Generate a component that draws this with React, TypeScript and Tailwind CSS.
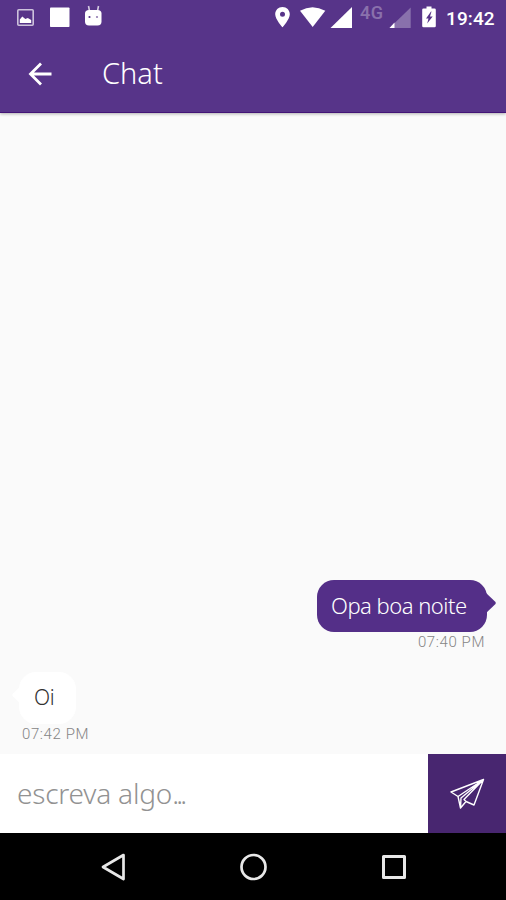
import React, { useState } from "react";
import { clsx } from "clsx";

interface Message {
  id: number;
  text: string;
  time: string;
  mine: boolean;
}

const MESSAGES: Message[] = [
  { id: 1, text: "Opa boa noite", time: "07:40 PM", mine: true },
  { id: 2, text: "Oi", time: "07:42 PM", mine: false },
];

function StatusBar() {
  return (
    <div className="flex h-[34px] items-center justify-between pl-[17px] pr-[10px] font-[Roboto,sans-serif] text-white">
      <svg width="86" height="34" viewBox="0 0 86 34" fill="currentColor" aria-hidden="true">
        {/* Gallery */}
        <rect x="0.8" y="9.8" width="15.4" height="15.4" rx="1" fill="none" stroke="currentColor" strokeWidth="1.6" opacity="0.7" />
        <path d="M2.8 23v-3.500l2.500-3 3 2.500 2.500-1 3.400 2V23z" />
        <rect x="33" y="7.5" width="19.500" height="19.500" rx="0.800" />
        {/* Android head */}
        <path d="M71.500 6l1 5M81.500 6l-1 5" stroke="currentColor" strokeWidth="1.600" opacity="0.75" />
        <path d="M68 13.500q0-3.500 4-3.500h8.500q4 0 4 3.500v8q0 4-4 4H72q-4 0-4-4z" />
        <circle cx="72.500" cy="17" r="1.100" fill="#573489" />
        <circle cx="80" cy="17" r="1.100" fill="#573489" opacity="0.65" />
      </svg>
      <div className="flex items-center">
        <svg width="80" height="34" viewBox="273 0 80 34" fill="currentColor" aria-hidden="true">
          <path fillRule="evenodd" d="M282.500 7c-4.200 0-7.300 3.200-7.300 7.200 0 5 7.300 13 7.300 13s7.300-8 7.300-13c0-4-3.100-7.200-7.300-7.200zm0 4.800a2.500 2.500 0 1 1 0 5 2.500 2.500 0 0 1 0-5z" />
          <path d="M300 10.800Q312.500 3.500 325.300 10.800L312.700 27z" />
          <path d="M352 7v21h-21.500z" />
        </svg>
        <span className="w-[31px] -translate-y-1 pl-[7px] text-[18px] font-medium leading-none tracking-[0.5px] opacity-30">4G</span>
        <svg width="62" height="34" viewBox="384 0 62 34" fill="currentColor" aria-hidden="true">
          <path d="M410.700 7.500V28h-21.200z" opacity="0.300" />
          <path d="M394.500 22.500V28h-5z" />
          <path fillRule="evenodd" d="M426.500 6.500h5v2h3q1.300 0 1.300 1.300V26q0 1.300-1.300 1.300h-11q-1.300 0-1.300-1.300V9.800q0-1.300 1.300-1.300h3zM431 11.500l-5 7h2.500l-1.300 5 5.500-7h-2.700l1.500-5z" />
        </svg>
        <span className="w-[50px] translate-y-px whitespace-nowrap text-[19px] font-medium leading-none tracking-[0.1px]">19:42</span>
      </div>
    </div>
  );
}

function Header() {
  return (
    <header className="z-10 h-[113px] shrink-0 border-b border-[#431477] bg-[#573489] text-white shadow-[0_1px_3px_rgba(0,0,0,0.3)]">
      <StatusBar />
      <div className="flex h-[77px] items-center pl-7">
        <button type="button" aria-label="Voltar" className="pt-0.5">
          <svg width="24" height="24" viewBox="0 0 24 24" fill="none" stroke="currentColor" strokeWidth="2.800" aria-hidden="true">
            <path d="M23.500 12H2.500M13 1.500L2.500 12L13 22.500" />
          </svg>
        </button>
        <h1 className="pl-[50px] text-[29px] font-light leading-none">Chat</h1>
      </div>
    </header>
  );
}

function Bubble({ message }: { message: Message }) {
  const { mine, text, time } = message;

  return (
    <div className={clsx("flex flex-col", mine ? "items-end pr-[19px]" : "items-start pl-[19px]")}>
      <div
        className={clsx(
          "relative flex h-[52px] items-center rounded-[17px] font-light",
          mine
            ? "w-[170px] bg-[#542f88] pb-0.5 pl-[14px] text-[22px] tracking-[-0.5px] text-white"
            : "w-[57px] bg-white pl-[15px] text-[21px] tracking-[-0.3px] text-[#333333]"
        )}
      >
        {text}
        <svg
          width="11"
          height="22"
          viewBox="0 0 11 22"
          fill="currentColor"
          className={clsx("absolute top-3", mine ? "-right-[9px] text-[#542f88]" : "-left-[7px] rotate-180 text-white")}
          aria-hidden="true"
        >
          <path d="M0 0L10.500 10Q11 11 10.500 12L0 22z" />
        </svg>
      </div>
      <time
        className={clsx(
          "font-[Roboto,sans-serif] text-[15px] font-light leading-[20px] tracking-[0.6px] text-[#858585]",
          mine ? "pr-[2px]" : "pl-[3px]"
        )}
      >
        {time}
      </time>
    </div>
  );
}

function Composer() {
  const [text, setText] = useState("");

  return (
    <form className="flex h-[79px] shrink-0 bg-white" onSubmit={(e: React.FormEvent) => e.preventDefault()}>
      <label className="relative flex min-w-0 flex-1 items-center text-[28px] font-light tracking-[-0.2px]">
        <input
          value={text}
          onChange={(e: React.ChangeEvent<HTMLInputElement>) => setText(e.target.value)}
          className="h-full w-full pl-[17px] outline-none"
        />
        {!text && (
          <span className="pointer-events-none absolute left-[17px] -translate-y-px text-[#929292]">
            escreva algo<span className="tracking-[-2.800px]">...</span>
          </span>
        )}
      </label>
      <button type="submit" aria-label="Enviar" className="flex w-[78px] items-center justify-center bg-[#482670] text-white">
        <svg width="36" height="32" viewBox="0 0 36 32" fill="none" stroke="currentColor" strokeWidth="1.400" strokeLinejoin="round" aria-hidden="true">
          <path d="M34.500 1.500L2 14L9 18.500L11.500 30L17 23.500L25 27zM34.500 1.500L9 18.500M34.500 1.500L12 20L11.500 30M34.500 1.500L15 21.500L17 23.500" />
        </svg>
      </button>
    </form>
  );
}

function NavBar() {
  return (
    <nav className="flex h-[67px] shrink-0 items-center justify-between bg-black pl-[100px] pr-[98px] text-[#e8e8e8]">
      <svg width="28" height="28" viewBox="0 0 28 28" fill="none" stroke="currentColor" strokeWidth="2.700" strokeLinejoin="round" aria-hidden="true">
        <path d="M23.500 2L3 14L23.500 26z" />
      </svg>
      <svg width="28" height="28" viewBox="0 0 28 28" fill="none" stroke="currentColor" strokeWidth="2.700" aria-hidden="true">
        <circle cx="13.500" cy="14" r="12" />
      </svg>
      <svg width="28" height="28" viewBox="0 0 28 28" fill="none" stroke="currentColor" strokeWidth="3" strokeLinejoin="round" aria-hidden="true">
        <rect x="3.500" y="3.500" width="21" height="21" />
      </svg>
    </nav>
  );
}

export default function App() {
  return (
    <div className="flex h-[900px] w-[506px] flex-col overflow-hidden bg-[#fafafa] font-['Noto_Sans',sans-serif]">
      <Header />
      <main className="flex flex-1 flex-col justify-end gap-5 pb-[10px]">
        {MESSAGES.map((message) => (
          <Bubble key={message.id} message={message} />
        ))}
      </main>
      <Composer />
      <NavBar />
    </div>
  );
}
